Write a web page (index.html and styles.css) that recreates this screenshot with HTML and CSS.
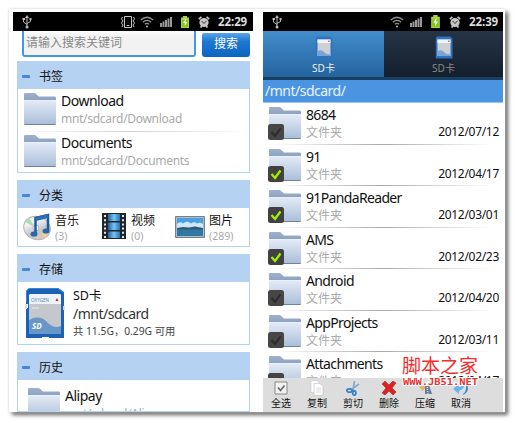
FILE: index.html
```html
<!DOCTYPE html>
<html lang="zh-CN">
<head>
  <meta charset="UTF-8">
  <meta name="viewport" content="width=device-width, initial-scale=1.0">
  <title>SD卡</title>
  <link rel="stylesheet" href="styles.css">
</head>
<body>
  <!-- shared icons -->
  <svg class="sprite">
    <defs>
      <linearGradient id="folder-front" x2="0" y2="1">
        <stop offset="0" stop-color="#e2eaf6"/>
        <stop offset="1" stop-color="#a9bdd8"/>
      </linearGradient>
      <linearGradient id="folder-back" x2="0" y2="1">
        <stop offset="0" stop-color="#9fb2cc"/>
        <stop offset="1" stop-color="#7089ac"/>
      </linearGradient>
      <linearGradient id="disc" x2="1" y2="1">
        <stop offset="0" stop-color="#d2e6c8"/>
        <stop offset=".3" stop-color="#f4f4f4"/>
        <stop offset=".6" stop-color="#c2c4c7"/>
        <stop offset="1" stop-color="#f1d3b2"/>
      </linearGradient>
      <linearGradient id="film" x2="1">
        <stop offset="0" stop-color="#1f5e9c"/>
        <stop offset=".5" stop-color="#79c4f2"/>
        <stop offset="1" stop-color="#2a72b0"/>
      </linearGradient>
    </defs>
    <symbol id="folder" viewBox="0 0 34 34">
      <path d="M1 2Q1 1 2 1H12L16 4.500H32Q33 4.500 33 6V20H1Z" fill="url(#folder-back)"/>
      <path d="M1 9H33V32Q33 33 32 33H2Q1 33 1 32Z" fill="url(#folder-front)"/>
      <path d="M1 8.500H33" stroke="#e9f0f9"/>
      <path d="M1.500 32.500H32.500" stroke="#6b829f"/>
    </symbol>
    <symbol id="usb" viewBox="0 0 10 14">
      <g fill="none" stroke="#bbb">
        <path d="M5 2V12M1.500 4V7L5 9.500M8.500 4V6.500L5 8.500"/>
      </g>
      <path d="M5 0L7 3H3ZM0.500 3H3V5H.5ZM7.500 3H9.500V5H7.500Z" fill="#bbb"/>
      <circle cx="5" cy="12" r="1.500" fill="#bbb"/>
    </symbol>
    <symbol id="vibrate" viewBox="0 0 16 12">
      <path d="M4.500 .5H11.500V11.500H4.500ZM6.500 9.500H9.500M2.500 1L1.500 3L3 5L1.500 7L3 9L2 11M13.500 1L14.500 3L13 5L14.500 7L13 9L14 11" fill="none" stroke="#c4c4c4"/>
    </symbol>
    <symbol id="wifi" viewBox="0 0 14 12">
      <g fill="none" stroke="#929292" stroke-width="1.200">
        <path d="M.8 4Q7-1.500 13.200 4M2.800 6.200Q7 2.500 11.200 6.200M4.800 8.300Q7 6.500 9.200 8.300"/>
      </g>
      <circle cx="7" cy="10.500" r="1" fill="#bbb"/>
    </symbol>
    <symbol id="signal" viewBox="0 0 12 10">
      <path d="M0 6H2V10H0ZM2.500 4.500H4.500V10H2.500ZM5 3H7V10H5ZM7.500 1.500H9.500V10H7.500ZM10 0H12V10H10Z" fill="#999"/>
    </symbol>
    <symbol id="battery" viewBox="0 0 8 12">
      <path d="M0 1.500H2V0H6V1.500H8V12H0Z" fill="#a9d34c"/>
      <path d="M1 4H7V11H1Z" fill="#84c510"/>
      <path d="M5 2.500L2 7H4L3.500 10.500L6.300 6H4.500Z" fill="#fff"/>
    </symbol>
    <symbol id="alarm" viewBox="0 0 12 12">
      <g fill="none" stroke="#c6c6c6" stroke-width="1.700">
        <path d="M.8 3.200L3.400 .9M11.200 3.200L8.600 .9M2.500 11.500L3.800 10M9.500 11.500L8.200 10"/>
      </g>
      <circle cx="6" cy="6.500" r="4.600" fill="#c6c6c6"/>
      <path d="M3.500 5L6 7.500L8.500 4.800" fill="none" stroke="#333"/>
    </symbol>
    <symbol id="sdcard" viewBox="0 0 40 52">
      <path d="M4 1H33L39 5V51H1V21H3V17H1V4Z" fill="#1b62b4"/>
      <path d="M1.500 15V4L4 1.500H33L38.500 5.500" fill="none" stroke="#3684d4"/>
      <rect x="4" y="7" width="32" height="40" rx="1.500" fill="#c4c7cb"/>
      <path d="M4 8.500Q4 7 5.500 7H34.500Q36 7 36 8.500V17H4Z" fill="#eff3f8"/>
      <path d="M4 33Q15 27 23 36Q29 42 36 39V47H4Z" fill="#6996c9"/>
      <path d="M32 11L33.500 14H30.500Z" fill="#d22"/>
      <path d="M7 21H14" stroke="#eee"/>
      <path d="M0 17H2V22H0ZM38 19H40V23H38Z" fill="#ddd"/>
      <path d="M17 50H24V52H17Z" fill="#fff"/>
    </symbol>
    <symbol id="sdcard-small" viewBox="0 0 18 23">
      <path d="M2 .5H15L17.500 2.500V22.500H.8V2Z" fill="#2c74c2"/>
      <path d="M2.500 3.500H15.500V20H2.500Z" fill="#cdd1d6"/>
      <path d="M2.500 3.500H15.500V7H2.500Z" fill="#eef3f8"/>
      <path d="M2.500 15Q7 13 9.500 16.500Q12 19 15.500 18V20H2.500Z" fill="#7ba4d1"/>
      <path d="M13.200 4.500H14.500V6H13.200Z" fill="#e05050"/>
    </symbol>
    <symbol id="check-on" viewBox="0 0 16 16">
      <rect width="16" height="16" rx="2.500" fill="#414141"/>
      <path d="M3.500 8L7 12L12.500 4.500" fill="none" stroke="#a1f000" stroke-width="2.300"/>
    </symbol>
    <symbol id="check-off" viewBox="0 0 16 16">
      <rect width="16" height="16" rx="2.500" fill="#464646"/>
      <path d="M3.500 8L7 12L12.500 4.500" fill="none" stroke="#2b2b2b" stroke-width="2"/>
    </symbol>
  </svg>

  <main>
    <section class="phone home">
      <header class="status">
        <svg class="usb" width="10" height="14"><use href="#usb"/></svg>
        <svg width="16" height="12"><use href="#vibrate"/></svg>
        <svg class="wifi" width="14" height="12"><use href="#wifi"/></svg>
        <svg class="signal" width="12" height="10"><use href="#signal"/></svg>
        <svg class="battery" width="8" height="12"><use href="#battery"/></svg>
        <svg class="alarm" width="12" height="12"><use href="#alarm"/></svg>
        <time>22:29</time>
      </header>

      <div class="search">
        <div class="search-input">请输入搜索关键词</div>
        <div class="search-button">搜索</div>
      </div>

      <article class="panel bookmarks">
        <h2>书签</h2>
        <div class="bookmark">
          <svg width="34" height="34"><use href="#folder"/></svg>
          <div><h3>Download</h3><p>mnt/sdcard/Download</p></div>
        </div>
        <div class="bookmark">
          <svg width="34" height="34"><use href="#folder"/></svg>
          <div><h3>Documents</h3><p>mnt/sdcard/Documents</p></div>
        </div>
      </article>

      <article class="panel categories">
        <h2>分类</h2>
        <div class="category-list">
          <div class="category music">
            <svg width="28" height="28" viewBox="0 0 28 28">
              <ellipse cx="14" cy="15" rx="13.500" ry="11.500" fill="url(#disc)" stroke="#aeb2b6" transform="rotate(18 14 15)"/>
              <path d="M2 9L12 14L6 5Z" fill="#a9dfb8"/>
              <path d="M17 17L26 20L22 25Z" fill="#f3cc98"/>
              <circle cx="13" cy="15" r="3" fill="#fff" stroke="#bbb"/>
              <path d="M12.500 21V5L25 2V18" fill="none" stroke="#1d5a9e" stroke-width="2.500"/>
              <path d="M12.500 6L25 3" stroke="#2c6db1" stroke-width="4"/>
              <ellipse cx="11" cy="21" rx="3.500" ry="2.600" fill="#2767ab"/>
              <ellipse cx="23" cy="18" rx="3.500" ry="2.600" fill="#2767ab"/>
            </svg>
            <div><h3>音乐</h3><p>(3)</p></div>
          </div>
          <div class="category video">
            <svg width="24" height="26" viewBox="0 0 24 26">
              <path d="M0 0H24V26H0Z" fill="#20262c"/>
              <path d="M6 1H18V8H6ZM6 9.500H18V17H6ZM6 18.500H18V25H6Z" fill="url(#film)"/>
              <path d="M3 2V25M21 2V25" stroke="#e5e5e5" stroke-width="2" stroke-dasharray="2 2.200"/>
            </svg>
            <div><h3>视频</h3><p>(0)</p></div>
          </div>
          <div class="category photo">
            <svg width="30" height="22" viewBox="0 0 30 22">
              <path d="M.5 .5H29.500V21.500H.5Z" fill="#4ba0e2" stroke="#74808b"/>
              <path d="M1.500 1.500H28.500V20.500H1.500Z" fill="none" stroke="#b4bcc3"/>
              <path d="M2 12V8Q5 5 8 7.500Q12 4 16 7.500Q19 5 22 7.500Q25 6 28 8V12Z" fill="#cfe7f8"/>
              <path d="M2 12H28V20H2Z" fill="#2f78a6"/>
              <path d="M2 12L8 11L14 11.500L20 10.500L28 12V13.500H2Z" fill="#2f5b78"/>
            </svg>
            <div><h3>图片</h3><p>(289)</p></div>
          </div>
        </div>
      </article>

      <article class="panel storage">
        <h2>存储</h2>
        <div class="storage-card">
          <svg width="40" height="52">
            <use href="#sdcard"/>
            <text x="6" y="15" textLength="18" lengthAdjust="spacingAndGlyphs" class="card-brand">OXYGEN</text>
            <text x="7" y="42" class="card-type">SD</text>
          </svg>
          <div>
            <h3>SD卡</h3>
            <h4>/mnt/sdcard</h4>
            <p>共 11.5G，0.29G 可用</p>
          </div>
        </div>
      </article>

      <article class="panel history">
        <h2>历史</h2>
        <div class="bookmark">
          <svg width="34" height="34"><use href="#folder"/></svg>
          <div><h3>Alipay</h3><p>mnt/sdcard/Alipay</p></div>
        </div>
      </article>
    </section>

    <section class="phone browser">
      <header class="status">
        <svg class="usb" width="10" height="14"><use href="#usb"/></svg>
        <svg class="wifi" width="14" height="12"><use href="#wifi"/></svg>
        <svg class="signal" width="12" height="10"><use href="#signal"/></svg>
        <svg class="battery" width="9" height="13"><use href="#battery"/></svg>
        <svg class="alarm" width="12" height="12"><use href="#alarm"/></svg>
        <time>22:39</time>
      </header>

      <nav class="tabs">
        <div class="tab active"><svg width="18" height="23"><use href="#sdcard-small"/></svg>SD卡</div>
        <div class="tab"><svg width="18" height="23"><use href="#sdcard-small"/></svg>SD卡</div>
      </nav>
      <div class="path">/mnt/sdcard/</div>

      <ul class="files">
        <li>
          <svg class="icon" width="34" height="34"><use href="#folder"/><use href="#check-off" y="18" width="16" height="16"/></svg>
          <div><h3>8684</h3><p>文件夹</p></div><time>2012/07/12</time>
        </li>
        <li>
          <svg class="icon" width="34" height="34"><use href="#folder"/><use href="#check-on" y="18" width="16" height="16"/></svg>
          <div><h3>91</h3><p>文件夹</p></div><time>2012/04/17</time>
        </li>
        <li>
          <svg class="icon" width="34" height="34"><use href="#folder"/><use href="#check-on" y="18" width="16" height="16"/></svg>
          <div><h3>91PandaReader</h3><p>文件夹</p></div><time>2012/03/01</time>
        </li>
        <li>
          <svg class="icon" width="34" height="34"><use href="#folder"/><use href="#check-on" y="18" width="16" height="16"/></svg>
          <div><h3>AMS</h3><p>文件夹</p></div><time>2012/02/23</time>
        </li>
        <li>
          <svg class="icon" width="34" height="34"><use href="#folder"/><use href="#check-off" y="18" width="16" height="16"/></svg>
          <div><h3>Android</h3><p>文件夹</p></div><time>2012/04/20</time>
        </li>
        <li>
          <svg class="icon" width="34" height="34"><use href="#folder"/><use href="#check-off" y="18" width="16" height="16"/></svg>
          <div><h3>AppProjects</h3><p>文件夹</p></div><time>2012/03/11</time>
        </li>
        <li>
          <svg class="icon" width="34" height="34"><use href="#folder"/><use href="#check-off" y="18" width="16" height="16"/></svg>
          <div><h3>Attachments</h3><p>文件夹</p></div><time>2012/04/17</time>
        </li>
      </ul>

      <footer class="toolbar">
        <div class="tool">
          <svg width="16" height="16" viewBox="0 0 16 16"><path d="M2 2H14V14H2Z" fill="#f2f2f2" stroke="#888"/><path d="M5 7.500L7.500 10.500L11.500 5.500" fill="none" stroke="#666" stroke-width="1.600"/></svg>
          全选
        </div>
        <div class="tool">
          <svg width="16" height="16" viewBox="0 0 16 16"><path d="M2 .5H8L11 3.500V12.500H2Z" fill="#fff" stroke="#c6c6c6" stroke-width=".6"/><path d="M5 3.500H11L14 6.500V15.500H5Z" fill="#fff" stroke="#bbb" stroke-width=".6"/><path d="M7 8H12M7 10H12M7 12H12" stroke="#ccc" stroke-width=".7"/></svg>
          复制
        </div>
        <div class="tool">
          <svg width="16" height="16" viewBox="0 0 16 16"><path d="M9.500 1L8 10M14 4L6 10" stroke="#8babc9" stroke-width="1.800"/><g fill="none" stroke="#347fc9" stroke-width="1.700"><ellipse cx="4.500" cy="10.500" rx="2.700" ry="1.700"/><ellipse cx="9.300" cy="13" rx="1.600" ry="2.200"/></g></svg>
          剪切
        </div>
        <div class="tool">
          <svg width="16" height="16" viewBox="0 0 16 16"><path d="M1 4L4 1L8 5L12 1L15 3L11 8L15 12L12 15L8 11L4 15L1 13L5 8Z" fill="#dc2222" stroke="#a71313" stroke-width=".5"/></svg>
          删除
        </div>
        <div class="tool">
          <svg width="16" height="16" viewBox="0 0 16 16"><path d="M1 4L8 2L11 7L5 11Z" fill="#e1b968"/><path d="M8 3L12 5L15 14H8Z" fill="#677c9b"/><path d="M10 5L11 14" stroke="#d7dce4" stroke-width="1.500" stroke-dasharray="1 1"/></svg>
          压缩
        </div>
        <div class="tool">
          <svg width="16" height="16" viewBox="0 0 16 16"><path d="M0 9L6 4V7Q10 7 9 1Q14 8 6 11V14Z" fill="#64b6f1"/><path d="M10 14Q15 10 12 2Q19 10 10 15Z" fill="#3687d4"/></svg>
          取消
        </div>
      </footer>
    </section>

    <div class="watermark">
      <strong>脚本之家</strong>
      <svg width="78" height="11"><text x="1" y="8" textLength="75" lengthAdjust="spacingAndGlyphs">WWW.JB51.NET</text></svg>
    </div>
  </main>
</body>
</html>
```

FILE: styles.css
```css
* {
  margin: 0;
  padding: 0;
  box-sizing: border-box;
}

body {
  width: 516px;
  height: 423px;
  padding: 9px;
  overflow: hidden;
  background: #ffffff;
  font-family: 'Noto Sans', 'Noto Sans CJK SC', sans-serif;
  color: #111111;
}

h2, h3, h4 {
  font-weight: 400;
}

svg {
  display: block;
  flex: none;
}

.sprite {
  position: absolute;
  width: 0;
  height: 0;
}

main {
  position: relative;
  width: 496px;
  height: 403px;
  padding: 3px 2px 0 4px;
  display: flex;
  gap: 10px;
  background: #ffffff;
  box-shadow: 0 0 2px #d0d0d0, 3px 3px 4px 0 #666666;
}

.phone {
  width: 240px;
  height: 400px;
  overflow: hidden;
  display: flex;
  flex-direction: column;
}

.status {
  flex: none;
  height: 19px;
  padding: 0 5px 0 9px;
  display: flex;
  align-items: center;
  background: #000000;
  color: #dddddd;
}

.browser .status {
  padding-right: 4px;
}

.status .usb {
  margin-right: auto;
}

.status .wifi {
  margin-left: 4px;
}

.status .signal {
  margin-left: 6px;
}

.status .battery {
  margin-left: 9px;
}

.status .alarm {
  margin-left: 9px;
}

.status time {
  width: 30px;
  margin-left: 8px;
  font: 700 11.5px 'Open Sans', sans-serif;
  letter-spacing: -0.1px;
  white-space: nowrap;
}

/* home screen */
.search {
  flex: none;
  height: 30px;
  padding: 0 3px 4px 9px;
  display: flex;
  gap: 6px;
}

.search-input {
  width: 174px;
  height: 26px;
  padding: 1px 2px;
  border: 2px solid #4596e3;
  border-top: 0;
  border-radius: 0 0 3px 3px;
  background: linear-gradient(#ffffff, #f2f2f2 5px);
  font-size: 12px;
  line-height: 22px;
  color: #888888;
}

.search-button {
  width: 48px;
  height: 24px;
  margin-top: 2px;
  border-radius: 2px 2px 3px 3px;
  background: linear-gradient(#5ba6ea, #1f77d0 35%, #0a66c2);
  font-size: 12px;
  line-height: 21px;
  text-align: center;
  color: #ffffff;
}

.panel {
  flex: none;
  width: 233px;
  margin: 0 0 7px 4px;
  border: 1px solid #b5d2f2;
  overflow: hidden;
}

.panel h2 {
  height: 27px;
  padding-left: 4px;
  display: flex;
  align-items: center;
  gap: 9px;
  background: #b5d2f2;
  font-size: 12px;
}

.panel h2::before {
  content: '';
  width: 8px;
  height: 3px;
  margin-top: 1px;
  border-radius: 1px;
  background: #4387d9;
}

.bookmarks {
  height: 112px;
}

.bookmark {
  height: 42px;
  padding: 3px 0 0 5px;
  display: flex;
  gap: 4px;
}

.bookmark + .bookmark {
  background: linear-gradient(90deg, #ffffff, #d0d0d0 50%, #ffffff) top / 100% 1px no-repeat;
}

.bookmark h3 {
  font-size: 14px;
  line-height: 18px;
  letter-spacing: -0.5px;
}

.bookmark p {
  font-size: 12px;
  line-height: 17px;
  letter-spacing: -0.3px;
  color: #aaaaaa;
}

.categories {
  height: 67px;
}

.category-list {
  display: flex;
}

.category {
  padding: 5px 0 0 5px;
  display: flex;
  gap: 4px;
}

.category h3 {
  font-size: 12px;
  line-height: 16px;
}

.category p {
  font-size: 10.5px;
  line-height: 14px;
  color: #aaaaaa;
}

.music {
  width: 79px;
}

.video {
  width: 73px;
  gap: 5px;
}

.photo svg {
  margin-top: 3px;
}

.storage {
  height: 91px;
}

.storage-card {
  padding: 5px 0 0 7px;
  display: flex;
  gap: 8px;
}

.storage h3 {
  font-size: 12.5px;
  line-height: 17px;
}

.storage h4 {
  font-size: 14px;
  line-height: 20px;
  letter-spacing: -0.5px;
  color: #333333;
}

.storage p {
  font-size: 10.3px;
  line-height: 14px;
  color: #444444;
}

.card-brand {
  font: 6px 'Open Sans', sans-serif;
  fill: #4b88ca;
}

.card-type {
  font: italic 700 8px 'Open Sans', sans-serif;
  fill: #ffffff;
}

.history {
  height: 60px;
  margin-bottom: 0;
}

.history .bookmark {
  padding: 7px 0 0 9px;
}

/* file browser */
.tabs {
  flex: none;
  height: 49px;
  display: flex;
  border-bottom: 3px solid #183f64;
}

.tab {
  width: 119px;
  padding-top: 5px;
  display: flex;
  flex-direction: column;
  align-items: center;
  background: linear-gradient(#253447, #151f2c);
  font-size: 10px;
  line-height: 18px;
  color: #888888;
}

.tab.active {
  width: 121px;
  background: linear-gradient(#438dcd, #23639e);
  color: #eeeeee;
}

.path {
  flex: none;
  height: 23px;
  padding-left: 2px;
  border-bottom: 1px solid #9dc6f3;
  background: #4b94e1;
  font-size: 14px;
  line-height: 22px;
  letter-spacing: -0.5px;
  color: #eaf4ff;
}

.files {
  height: 275px;
  overflow: hidden;
  list-style: none;
}

.files li {
  height: 41.5px;
  padding: 3px 4px 0 5px;
  display: flex;
  gap: 4px;
  background: linear-gradient(90deg, #ffffff 4%, #a9a9a9 50%, #ffffff 96%) bottom / 100% 1px no-repeat;
}

.files h3 {
  font-size: 14px;
  line-height: 18px;
  letter-spacing: -0.65px;
}

.files p {
  font-size: 12px;
  line-height: 17px;
  color: #aaaaaa;
}

.files time {
  margin: 18px 0 0 auto;
  font-size: 12px;
  line-height: 16px;
  letter-spacing: -0.3px;
}

.toolbar {
  flex: none;
  height: 34px;
  display: flex;
  background: #dddddd;
}

.tool {
  width: 36px;
  padding-top: 2px;
  display: flex;
  flex-direction: column;
  align-items: center;
  font-size: 10px;
  line-height: 15px;
}

.watermark {
  position: absolute;
  top: 344px;
  left: 393px;
  font-family: 'Noto Sans CJK SC', sans-serif;
}

.watermark strong {
  display: block;
  height: 24px;
  font-size: 19px;
  font-weight: 400;
  line-height: 24px;
  color: #f32d2d;
}

.watermark text {
  font: 700 8px 'DejaVu Sans Mono', monospace;
  fill: #e93131;
  stroke: #ffffff;
  stroke-width: 2px;
  paint-order: stroke;
}
```
